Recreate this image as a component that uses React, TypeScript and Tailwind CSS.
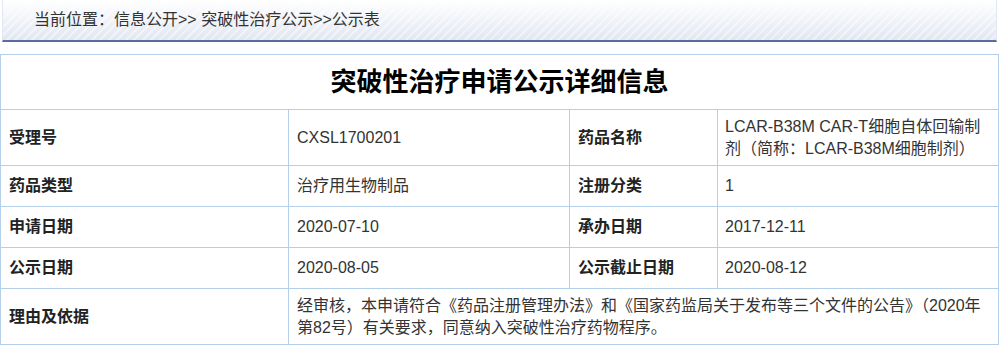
const rows = [
  { a: '受理号', b: 'CXSL1700201', c: '药品名称', d: 'LCAR-B38M CAR-T细胞自体回输制剂（简称：LCAR-B38M细胞制剂）', h: 'h-[56px]' },
  { a: '药品类型', b: '治疗用生物制品', c: '注册分类', d: '1', h: 'h-[41px]' },
  { a: '申请日期', b: '2020-07-10', c: '承办日期', d: '2017-12-11', h: 'h-[41px]' },
  { a: '公示日期', b: '2020-08-05', c: '公示截止日期', d: '2020-08-12', h: 'h-[41px]' },
];

const App = () => {
  return (
    <div className="w-[1000px] h-[345px] bg-white text-[16px] leading-[22px] text-[#333] font-['Liberation_Sans','Noto_Sans_CJK_SC',sans-serif] overflow-hidden">
      <div className="mx-[2px] w-[995px] h-[42px] border-b-2 border-[#5b6c9c] border-x border-x-[#e2e8f2] bg-[repeating-linear-gradient(135deg,rgba(255,255,255,0.45)_0px,rgba(255,255,255,0.45)_2px,transparent_2px,transparent_6px),linear-gradient(to_bottom,#ffffff,#e1e6f1)] flex items-center pl-[31px]">
        当前位置：信息公开&gt;&gt; 突破性治疗公示&gt;&gt;公示表
      </div>
      <div className="h-[12px]" />
      <table className="w-[999px] border-collapse table-fixed">
        <colgroup>
          <col className="w-[288px]" />
          <col className="w-[281px]" />
          <col className="w-[148px]" />
          <col />
        </colgroup>
        <tbody>
          <tr className="h-[55px]">
            <td colSpan={4} className="border border-[#b4cfea] text-center text-[26px] font-bold text-black">
              突破性治疗申请公示详细信息
            </td>
          </tr>
          {rows.map((r) => (
            <tr key={r.a} className={r.h}>
              <td className="border border-[#b4cfea] px-2 font-bold text-[#222]">{r.a}</td>
              <td className="border border-[#b4cfea] px-2">{r.b}</td>
              <td className="border border-[#b4cfea] px-2 font-bold text-[#222]">{r.c}</td>
              <td className="border border-[#b4cfea] px-[7px] py-[5px]">{r.d}</td>
            </tr>
          ))}
          <tr className="h-[56px]">
            <td className="border border-[#b4cfea] px-2 font-bold text-[#222]">理由及依据</td>
            <td colSpan={3} className="border border-[#b4cfea] px-2 py-[5px]">
              经审核，本申请符合《药品注册管理办法》和《国家药监局关于发布等三个文件的公告》（2020年第82号）有关要求，同意纳入突破性治疗药物程序。
            </td>
          </tr>
        </tbody>
      </table>
    </div>
  );
};

export default App;
